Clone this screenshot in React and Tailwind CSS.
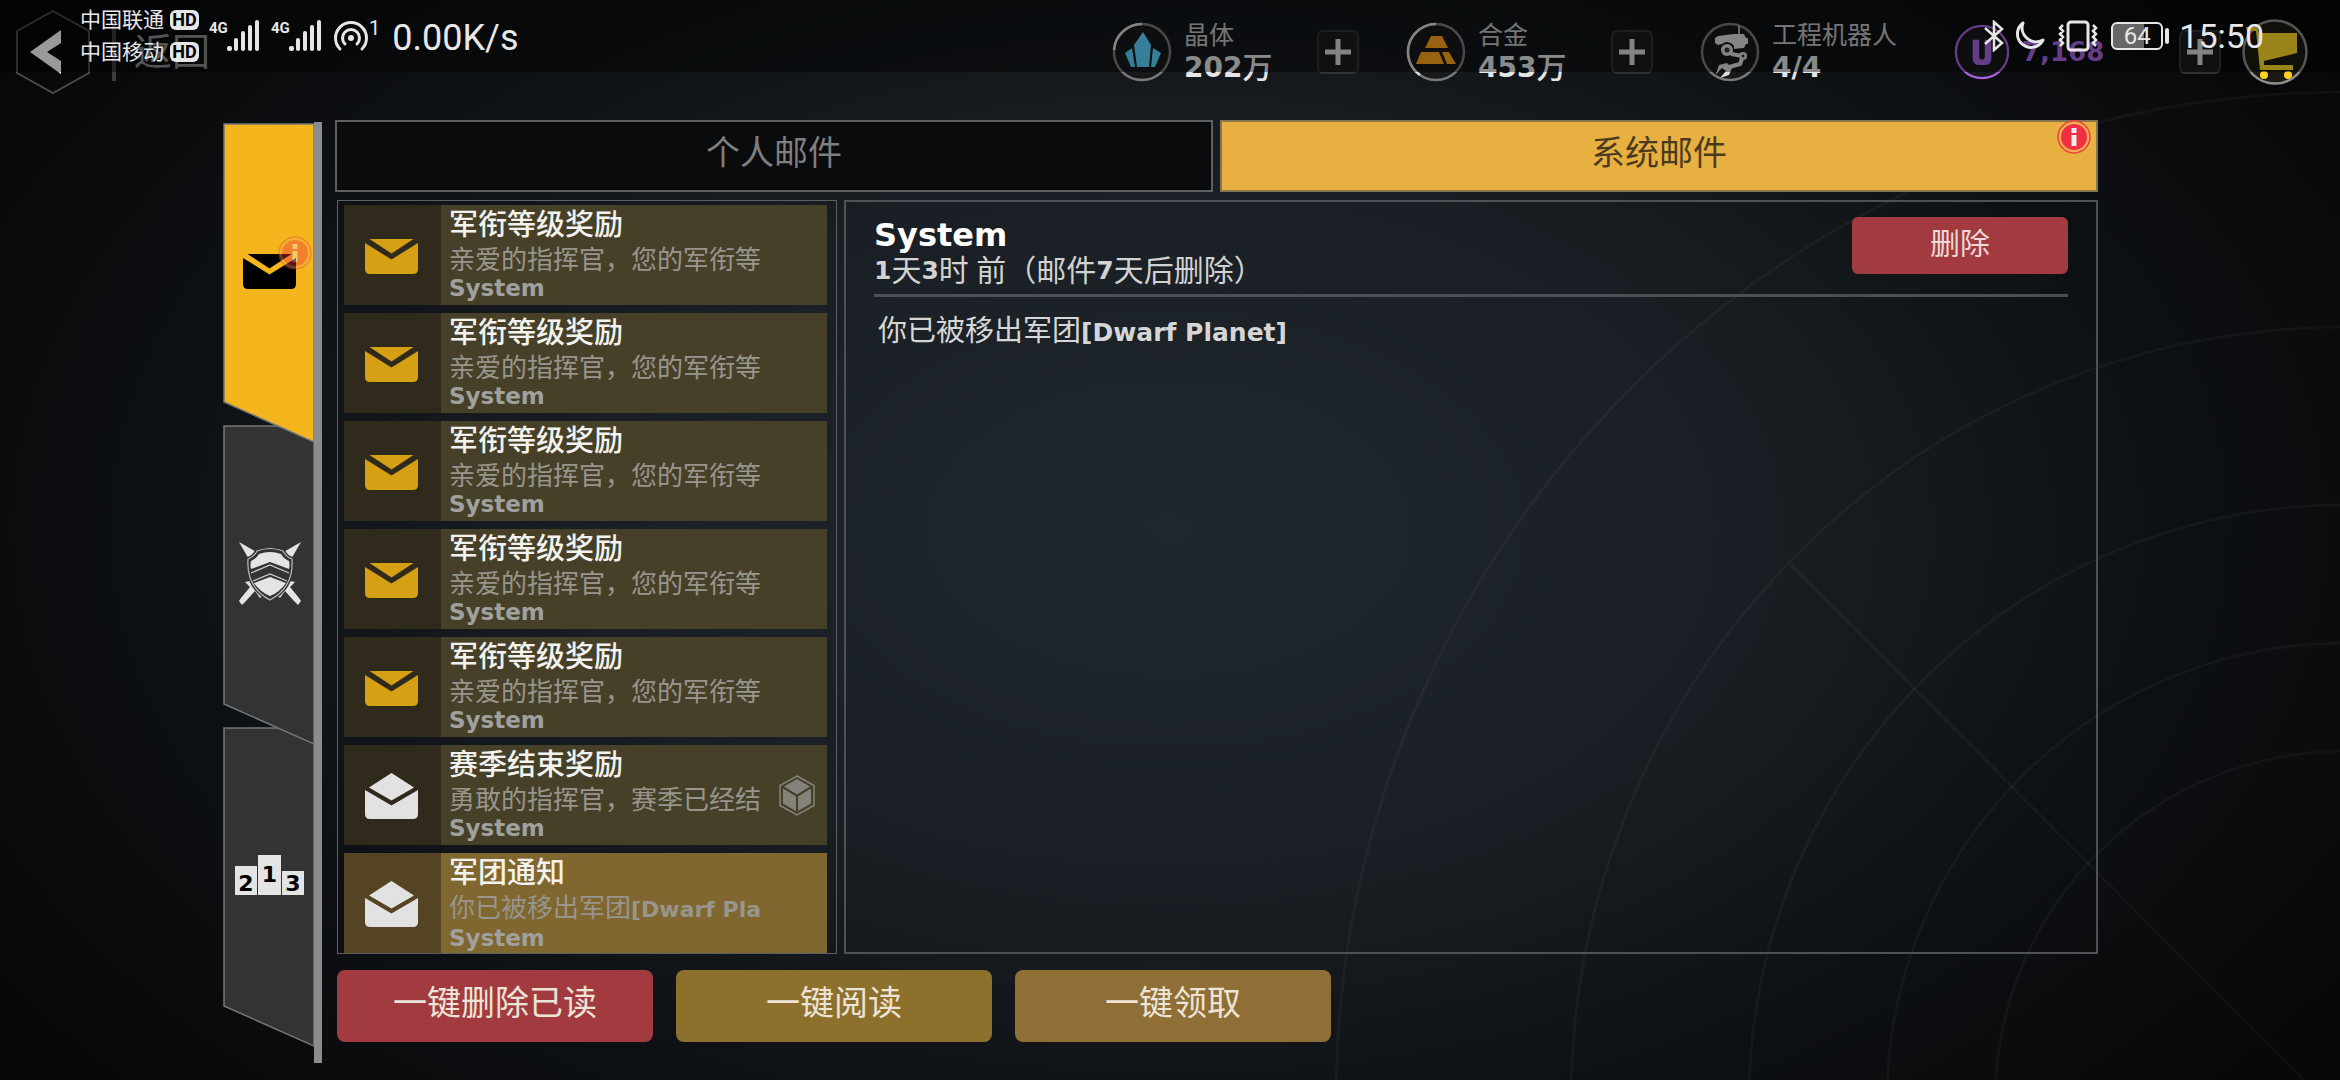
import React, { useState } from "react";

const SANS = "font-['Roboto','Noto_Sans_CJK_SC',sans-serif]";
const TECH = "font-['DejaVu_Sans','Noto_Sans_CJK_SC',sans-serif] font-bold";

const MAILS = [
    { id: 1, title: "军衔等级奖励", preview: "亲爱的指挥官，您的军衔等" },
    { id: 2, title: "军衔等级奖励", preview: "亲爱的指挥官，您的军衔等" },
    { id: 3, title: "军衔等级奖励", preview: "亲爱的指挥官，您的军衔等" },
    { id: 4, title: "军衔等级奖励", preview: "亲爱的指挥官，您的军衔等" },
    { id: 5, title: "军衔等级奖励", preview: "亲爱的指挥官，您的军衔等" },
    { id: 6, title: "赛季结束奖励", preview: "勇敢的指挥官，赛季已经结", read: true, loot: true },
    { id: 7, title: "军团通知", preview: "你已被移出军团", latin: "[Dwarf Pla", read: true },
];

/* ---------- icons ---------- */

function MailIcon({ className }) {
    return (
        <svg width="53" height="35" viewBox="0 0 53 35" fill="currentColor" className={className}>
            <path d="M4.5 0H48.5L26.5 14.5Z" />
            <path d="M0 4L26.5 20.5L53 4V30Q53 35 48 35H5Q0 35 0 30Z" />
        </svg>
    );
}

function OpenMailIcon({ className }) {
    return (
        <svg width="53" height="46" viewBox="0 0 53 46" fill="currentColor" className={className}>
            <path d="M26.5 0L49 14.5L26.5 27.5L4 14.5Z" />
            <path d="M0 17L26.5 32.5L53 17V41Q53 46 48 46H5Q0 46 0 41Z" />
        </svg>
    );
}

function ShieldIcon() {
    return (
        <svg width="64" height="64" viewBox="0 0 64 64" fill="#e4e4e4">
            <path d="M1 1L20 12L12 20Z" />
            <path d="M63 1L44 12L52 20Z" />
            <path d="M7 41L12 46L3 57L1 60L4 64L8 60L17 50L22 57L26 54L12 40Z" />
            <path d="M57 41L52 46L61 57L63 60L60 64L56 60L47 50L42 57L38 54L52 40Z" />
            <path d="M19 10Q32 5 45 10Q48 16 54 18Q56 46 32 59Q8 46 10 18Q16 16 19 10Z" fill="#333" stroke="#333" strokeWidth="4" />
            <path d="M19 10Q32 5 45 10Q48 16 54 18Q56 46 32 59Q8 46 10 18Q16 16 19 10Z" fill="#333" stroke="#bdbdbd" strokeWidth="1.2" />
            <path d="M21 13Q32 9 43 13Q46 18 51 20Q52 24 51 28L32 21L13 28Q12 24 13 20Q18 18 21 13Z" />
            <path d="M16 42L32 36L48 42Q42 51 32 55Q22 51 16 42Z" />
            <path d="M13 32L32 24L51 32M15 40L32 33L49 40" fill="none" stroke="#d0d0d0" strokeWidth="1.2" />
        </svg>
    );
}

function RankIcon() {
    return (
        <span className={`${TECH} flex items-end gap-px text-[22px] leading-none text-black`}>
            <span className="flex h-[29px] w-[22px] items-end justify-center bg-[#e4e4e4]">2</span>
            <span className="flex h-10 w-[23px] items-center justify-center bg-[#e4e4e4]">1</span>
            <span className="flex h-6 w-[22px] items-end justify-center bg-[#e4e4e4]">3</span>
        </span>
    );
}

function CubeIcon() {
    return (
        <svg width="36" height="41" viewBox="0 0 36 41" className="text-[#83827b]">
            <path d="M18 1L35 10.5V30.5L18 40L1 30.5V10.5Z" fill="none" stroke="currentColor" strokeWidth="1.5" />
            <path d="M18 4L31 11.5L18 19.500L5 11.500ZM4 13.500L17 21.500V36L4 28.500ZM32 13.500L19 21.500V36L32 28.500Z" fill="currentColor" />
        </svg>
    );
}

function InfoBadge({ className }) {
    return (
        <svg width="34" height="34" viewBox="0 0 34 34" className={className}>
            <circle cx="17" cy="17" r="16" fill="#f0b050" stroke="#e8433f" strokeWidth="1.5" />
            <circle cx="17" cy="17" r="13" fill="#f02f43" />
            <path d="M14.500 8H19.500V13H14.500ZM14.500 15H19.500V26H14.500Z" fill="#eee" />
        </svg>
    );
}

function Ring({ children, color = "#7a7a7a", size = 60 }) {
    return (
        <svg width={size} height={size} viewBox="0 0 60 60" className="shrink-0">
            <circle cx="30" cy="30" r="28" fill="#16181a" stroke={color} strokeWidth="2.5" />
            {children}
        </svg>
    );
}

function CrystalIcon() {
    return (
        <Ring>
            <path d="M30 2A28 28 0 0 0 2 28" fill="none" stroke="#ddd" strokeWidth="2.5" />
            <path d="M31 10L39 23L37 45H25L22 23ZM20 26L23 45H19L13 31ZM41 26L49 31L43 45H39Z" fill="#5cd4ff" />
        </Ring>
    );
}

function AlloyIcon() {
    return (
        <Ring>
            <path d="M30 2A28 28 0 0 0 14 53" fill="none" stroke="#ddd" strokeWidth="2.5" />
            <path d="M25 14H36L42 26H19ZM15 30H33L38 42H10ZM36 30H43L50 42H41Z" fill="#ffa31c" />
        </Ring>
    );
}

function RobotIcon() {
    return (
        <Ring>
            <path d="M39 4V12" stroke="#dcdcdc" strokeWidth="1.5" />
            <path d="M18 14L34 12H44L46 16H48V22H46L44 26L34 27V24A8 8 0 0 0 22 22L18 23L15 21V16Z" fill="#dcdcdc" />
            <circle cx="27" cy="28" r="6" fill="#dcdcdc" />
            <circle cx="27" cy="28" r="2.500" fill="#333" />
            <path d="M31 32L43 34L40 42L29 45" fill="none" stroke="#dcdcdc" strokeWidth="4" />
            <circle cx="43" cy="34" r="4" fill="#dcdcdc" />
            <circle cx="43" cy="34" r="1.500" fill="#333" />
            <path d="M16 52L19 43L27 41L32 46L29 53L20 56L26 49L22 46Z" fill="#dcdcdc" />
        </Ring>
    );
}

function UCoinIcon() {
    return (
        <Ring size={56} color="#a965e0">
            <path d="M20 17H27V35Q27 38 30 38Q33 38 33 35V17H40V37Q40 44 33 44H27Q20 44 20 37Z" fill="#a965e0" />
        </Ring>
    );
}

function CartIcon() {
    return (
        <svg width="66" height="66" viewBox="0 0 66 66">
            <circle cx="33" cy="33" r="31.500" fill="#1b1a12" stroke="#8f8f8f" strokeWidth="2.500" />
            <path d="M4 8H15L17 14H55V34L22 42V46H51V51H18L14 12H5Z" fill="#ffdc2c" />
            <circle cx="22" cy="56" r="4" fill="#ffd21e" />
            <circle cx="46" cy="56" r="4" fill="#ffd21e" />
        </svg>
    );
}

function SignalIcon() {
    return (
        <svg width="34" height="32" viewBox="0 0 34 32" fill="#e6e6e6">
            <rect x="0" y="26" width="5" height="5" rx="2" />
            <rect x="7" y="18" width="4" height="13" rx="2" />
            <rect x="14" y="11" width="4" height="20" rx="2" />
            <rect x="21" y="5" width="4" height="26" rx="2" />
            <rect x="28" y="0" width="4" height="31" rx="2" />
        </svg>
    );
}

function HotspotIcon() {
    return (
        <svg width="36" height="32" viewBox="0 0 36 32" fill="none" stroke="#e6e6e6" strokeWidth="3" strokeLinecap="round">
            <circle cx="18" cy="18" r="3" fill="#e6e6e6" stroke="none" />
            <path d="M7 29A15.500 15.500 0 1 1 29 29" />
            <path d="M12 24A8.500 8.500 0 1 1 24 24" />
        </svg>
    );
}

/* ---------- top bars ---------- */

function PlusButton() {
    return (
        <button aria-label="+" className="flex h-11 w-[42px] items-center justify-center rounded-md border-2 border-[#303236] bg-[#1b1c1f]">
            <svg width="28" height="28" viewBox="0 0 28 28" stroke="#dadada" strokeWidth="5">
                <path d="M14 1V27M1 14H27" />
            </svg>
        </button>
    );
}

function Resource({ icon, label, value, unit, plus }) {
    return (
        <div className="flex items-center">
            {icon}
            <div className="ml-3 w-[133px] whitespace-nowrap">
                <div className="text-[25px] leading-8 text-[#c4c4c4]">{label}</div>
                <div className="flex items-center leading-8 text-[#e6e6e6]">
                    <span className={`${TECH} text-[28px]`}>{value}</span>
                    {unit && <span className="text-[30px] font-medium">{unit}</span>}
                </div>
            </div>
            {plus && <PlusButton />}
        </div>
    );
}

function Header() {
    return (
        <header className="flex h-[104px] items-center justify-between pl-4 pr-8">
            <a href="#back" className="flex items-center">
                <svg width="74" height="84" viewBox="0 0 74 84">
                    <path d="M37 1L73 21V63L37 83L1 63V21Z" fill="none" stroke="#4a4a4a" strokeWidth="2" />
                    <path d="M45 20V33L31 42L45 51V64L14 42Z" fill="#fff" />
                </svg>
                <span className="ml-[22px] h-[58px] w-1 bg-[#3c3c3c]" />
                <span className="ml-[18px] text-[38px] leading-none text-[#8a8a8a]">返回</span>
            </a>
            <div className="grid grid-cols-[294px_294px_254px_288px_66px] items-center">
                <Resource icon={<CrystalIcon />} label="晶体" value="202" unit="万" plus />
                <Resource icon={<AlloyIcon />} label="合金" value="453" unit="万" plus />
                <Resource icon={<RobotIcon />} label="工程机器人" value="4/4" />
                <div className="flex items-center">
                    <UCoinIcon />
                    <span className={`${TECH} ml-3 w-[157px] text-[26px] text-[#a965e0]`}>7,168</span>
                    <PlusButton />
                </div>
                <a href="#shop" aria-label="商店"><CartIcon /></a>
            </div>
        </header>
    );
}

function Carrier({ name }) {
    return (
        <div className="flex items-center gap-1.5">
            <span className="text-[21px] leading-8">{name}</span>
            <span className="flex h-5 w-[29px] items-center justify-center rounded-md bg-[#e6e6e6] text-[18px] font-bold leading-none text-black">HD</span>
        </div>
    );
}

// phone status bar, lies over the game header
function StatusBar() {
    return (
        <div className="pointer-events-none absolute inset-x-0 top-0 z-50 flex h-[72px] items-start justify-between bg-black/40 pl-20 pr-[76px] text-[#e8e8e8]">
            <div className="flex items-start">
                <div className="mt-1">
                    <Carrier name="中国联通" />
                    <Carrier name="中国移动" />
                </div>
                <div className="ml-2.5 mt-5 flex items-start">
                    <span className="w-[18px] text-[15px] font-bold leading-4">4G</span>
                    <SignalIcon />
                    <span className="ml-2.5 w-[18px] text-[15px] font-bold leading-4">4G</span>
                    <SignalIcon />
                    <span className="ml-2.5"><HotspotIcon /></span>
                    <span className="text-[20px] leading-4">1</span>
                </div>
                <span className="ml-3 mt-5 text-[36px] leading-9">0.00K/s</span>
            </div>
            <div className="mt-5 flex items-center">
                <svg width="22" height="32" viewBox="0 0 22 32" fill="none" stroke="#e6e6e6" strokeWidth="2.500">
                    <path d="M2 8L19 23L11 30V2L19 9L2 24" />
                </svg>
                <svg width="32" height="30" viewBox="0 0 32 30" fill="none" stroke="#e6e6e6" strokeWidth="3" strokeLinejoin="round" className="ml-2">
                    <path d="M10 2A13.500 13.500 0 1 0 30 19A14 14 0 0 1 10 2Z" />
                </svg>
                <svg width="42" height="32" viewBox="0 0 42 32" fill="none" stroke="#e6e6e6" strokeWidth="3" className="ml-3">
                    <rect x="11" y="2" width="20" height="28" rx="3" />
                    <path d="M6 5L3 8L6 11L3 14L6 17L3 20L6 23L3 26M36 5L39 8L36 11L39 14L36 17L39 20L36 23L39 26" strokeWidth="2.500" />
                </svg>
                <span className="ml-3 flex h-7 w-[52px] items-center justify-center rounded-md border-2 border-[#e6e6e6] bg-linear-to-r from-[#666] from-64% to-transparent to-64% text-[24px] leading-none">64</span>
                <span className="ml-0.5 h-4 w-1 rounded-sm bg-[#e6e6e6]" />
                <span className="ml-2.5 text-[34px] leading-8">15:50</span>
            </div>
        </div>
    );
}

/* ---------- side tabs ---------- */

function SideTab({ label, on, className, onClick, children }) {
    return (
        <button aria-label={label} onClick={onClick} className={`relative flex h-80 w-[91px] items-center justify-center pb-6 pl-0.5 ${className}`}>
            <svg viewBox="0 0 91 320" className="absolute inset-0 h-full w-full">
                <path d="M1 1H91V319L1 279Z" fill={on ? "#f4b51d" : "#333333"} stroke="#74777a" strokeWidth="1.500" />
            </svg>
            <span className="relative">{children}</span>
        </button>
    );
}

function SideTabs() {
    const [tab, setTab] = useState("mail");
    return (
        <nav className="flex">
            <div className="flex flex-col pb-4 pt-[3px]">
                <SideTab label="邮件" on={tab === "mail"} onClick={() => setTab("mail")} className="z-30">
                    <MailIcon className="text-black" />
                    <InfoBadge className="absolute -right-4 -top-[18px] opacity-40" />
                </SideTab>
                <SideTab label="军团" on={tab === "legion"} onClick={() => setTab("legion")} className="z-20 -mt-[18px]">
                    <ShieldIcon />
                </SideTab>
                <SideTab label="排名" on={tab === "rank"} onClick={() => setTab("rank")} className="z-10 -mt-[18px]">
                    <RankIcon />
                </SideTab>
            </div>
            <div className="mt-0.5 w-2 bg-[#8b8c8e]" />
        </nav>
    );
}

/* ---------- mail ---------- */

function MailItem({ mail, on, onClick }) {
    return (
        <button onClick={onClick} className={`flex h-[100px] w-full text-left ${on ? "bg-[#80662f]" : "bg-[#474029]"}`}>
            <span className={`flex w-[97px] shrink-0 items-center justify-center self-stretch pr-0.5 pt-0.5 ${on ? "bg-[#554423]" : "bg-[#302a1d]"}`}>
                {mail.read ? <OpenMailIcon className="text-[#e2e2e2]" /> : <MailIcon className="text-[#d5a014]" />}
            </span>
            <span className="flex flex-1 flex-col whitespace-nowrap pl-2">
                <span className="text-[29px] font-medium leading-10 text-[#f2f2ee]">{mail.title}</span>
                <span className="text-[26px] leading-[30px] text-[#98958c]">
                    {mail.preview}
                    {mail.latin && <span className={`${TECH} text-[22px]`}>{mail.latin}</span>}
                </span>
                <span className={`${TECH} text-[23px] leading-[26px] text-[#a0a09e]`}>System</span>
            </span>
            {mail.loot && <span className="mr-3 self-center"><CubeIcon /></span>}
        </button>
    );
}

function MailDetail() {
    return (
        <section className="flex-1 border-2 border-[#4e5256] px-7 pt-[15px]">
            <div className="flex h-20 items-start justify-between border-b-[3px] border-[#4c5054]">
                <div>
                    <h2 className={`${TECH} text-[32px] leading-9 text-white`}>System</h2>
                    <p className="flex items-center whitespace-pre text-[30px] leading-9 text-[#d2d2d2]">
                        <span className={`${TECH} text-[25px]`}>1</span>天
                        <span className={`${TECH} text-[25px]`}>3</span>时 前（邮件
                        <span className={`${TECH} text-[25px]`}>7</span>天后删除）
                    </p>
                </div>
                <button className="h-[57px] w-[216px] rounded-md bg-[#a23b40] pb-1 text-[30px] text-[#ecd8d8]">删除</button>
            </div>
            <p className="mt-4 pl-1 text-[29px] leading-9 text-[#d6d6d6]">
                你已被移出军团<span className={`${TECH} text-[25px]`}>[Dwarf Planet]</span>
            </p>
        </section>
    );
}

function Backdrop() {
    return (
        <svg viewBox="0 0 2340 1080" preserveAspectRatio="xMaxYMax slice" fill="none" stroke="#ffffff" strokeOpacity="0.035" strokeWidth="3" className="pointer-events-none absolute inset-0 h-full w-full">
            {[350, 458, 596, 774, 1009].map((r) => (
                <circle key={r} cx="2345" cy="1101" r={r} />
            ))}
            <path d="M1790 564L2325 1101" />
        </svg>
    );
}

export default function App() {
    const [box, setBox] = useState("system");
    const [selected, setSelected] = useState(7);

    return (
        <div className={`${SANS} relative min-h-screen overflow-hidden bg-[#050607] bg-[radial-gradient(ellipse_60%_80%_at_50%_49%,#20272e_0%,#191f24_40%,#0e1114_70%,#060708_100%)]`}>
            <Backdrop />
            <StatusBar />
            <div className="relative">
                <Header />
                <main className="flex gap-[13px] pl-[223px] pr-[242px] pt-4">
                    <SideTabs />
                    <div className="flex-1">
                        <div className="grid grid-cols-2 gap-[7px]">
                            <button
                                onClick={() => setBox("personal")}
                                className={`h-[72px] border-2 border-[#5c6063] pb-1.5 text-[34px] ${box === "personal" ? "bg-[#e8b040] text-[#4a3b1e]" : "bg-[#0a0b0d] text-[#7f7f7f]"}`}
                            >
                                个人邮件
                            </button>
                            <button
                                onClick={() => setBox("system")}
                                className={`relative h-[72px] border-2 border-[#857650] pb-1.5 text-[34px] ${box === "system" ? "bg-[#e8b040] text-[#4a3b1e]" : "bg-[#0a0b0d] text-[#7f7f7f]"}`}
                            >
                                系统邮件
                                <InfoBadge className="absolute -top-0.5 right-[5px]" />
                            </button>
                        </div>
                        <div className="mt-2 flex gap-[7px] pl-0.5">
                            <div className="flex w-[500px] flex-col gap-2 border border-[#5c6063] pl-1.5 pr-[9px] pt-1">
                                {MAILS.map((m) => (
                                    <MailItem key={m.id} mail={m} on={selected === m.id} onClick={() => setSelected(m.id)} />
                                ))}
                            </div>
                            <MailDetail />
                        </div>
                        <div className="mt-4 flex gap-[23px] pl-0.5 text-[34px] text-[#ece4d6]">
                            <button className="h-[72px] w-[316px] rounded-lg bg-[#a23b40] pb-1.5">一键删除已读</button>
                            <button className="h-[72px] w-[316px] rounded-lg bg-[#8d702c] pb-1.5">一键阅读</button>
                            <button className="h-[72px] w-[316px] rounded-lg bg-[#8f6f35] pb-1.5">一键领取</button>
                        </div>
                    </div>
                </main>
            </div>
        </div>
    );
}
